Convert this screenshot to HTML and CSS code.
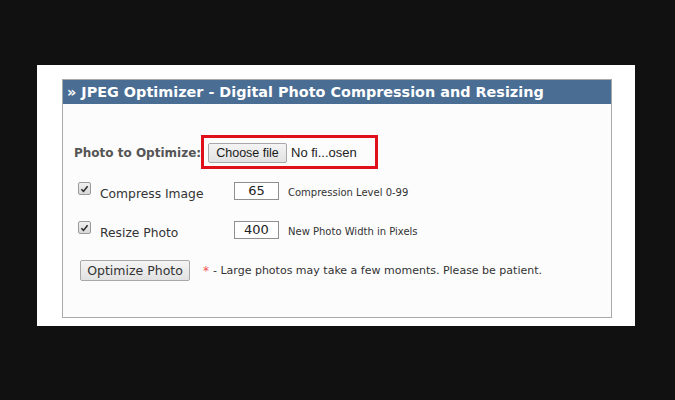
FILE: index.html
```html
<!DOCTYPE html>
<html>
<head>
<meta charset="utf-8">
<link rel="stylesheet" href="styles.css">
</head>
<body>
<div class="panel">
  <div class="box">
    <div class="head">» JPEG Optimizer - Digital Photo Compression and Resizing</div>
    <div class="row row-file">
      <span class="flabel">Photo to Optimize:</span>
      <span class="highlight">
        <button class="btn btn-file">Choose file</button>
        <span class="fname">No fi...osen</span>
      </span>
    </div>
    <div class="row row-opt">
      <span class="check"><svg viewBox="0 0 12 12" width="12" height="12"><path d="M2.6 6.2 L4.9 8.6 L9.4 2.9" fill="none" stroke="#2a2a2a" stroke-width="1.7"/></svg></span>
      <span class="olabel">Compress Image</span>
      <span class="num">65</span>
      <span class="note">Compression Level 0-99</span>
    </div>
    <div class="row row-opt row-opt2">
      <span class="check"><svg viewBox="0 0 12 12" width="12" height="12"><path d="M2.6 6.2 L4.9 8.6 L9.4 2.9" fill="none" stroke="#2a2a2a" stroke-width="1.7"/></svg></span>
      <span class="olabel">Resize Photo</span>
      <span class="num">400</span>
      <span class="note">New Photo Width in Pixels</span>
    </div>
    <div class="row row-go">
      <button class="btn btn-go">Optimize Photo</button>
      <span class="star">*</span>
      <span class="msg">- Large photos may take a few moments. Please be patient.</span>
    </div>
  </div>
</div>
</body>
</html>
```

FILE: styles.css
```css
html, body {
  margin: 0;
  padding: 0;
  background: #111111;
  height: 400px;
  overflow: hidden;
}
body {
  padding: 65px 0 0 37px;
  box-sizing: border-box;
  font-family: "DejaVu Sans", Verdana, sans-serif;
}
.panel {
  width: 598px;
  height: 261px;
  background: #ffffff;
  padding: 14px 0 0 25px;
  box-sizing: border-box;
}
.box {
  width: 550px;
  height: 239px;
  box-sizing: border-box;
  border: 1px solid #a9a9a9;
  background: #fcfcfc;
}
.head {
  height: 24px;
  line-height: 24px;
  background: #4a6d93;
  color: #ffffff;
  font-weight: bold;
  font-size: 14.4px;
  padding-left: 4px;
  white-space: nowrap;
  overflow: hidden;
}
.row {
  display: flex;
  align-items: center;
}
.row-file {
  margin-top: 31px;
  height: 34px;
  padding-left: 11px;
}
.flabel {
  font-weight: bold;
  font-size: 12px;
  color: #555555;
  width: 127px;
  flex-shrink: 0;
  white-space: nowrap;
  padding-top: 1px;
}
.highlight {
  display: flex;
  align-items: center;
  border: 3px solid #e0101a;
  padding: 5px 18px 4px 4px;
  height: 34px;
  box-sizing: border-box;
}
.btn {
  font-family: "Liberation Sans", Arial, sans-serif;
  color: #1a1a1a;
  background: linear-gradient(#f4f4f4, #e2e2e2);
  border: 1px solid #a8a8a8;
  border-radius: 2px;
  padding: 0;
  margin: 0;
}
.btn-file {
  width: 79px;
  height: 20px;
  font-size: 12.5px;
}
.fname {
  font-family: "Liberation Sans", Arial, sans-serif;
  font-size: 13px;
  color: #222222;
  margin-left: 4px;
}
.row-opt {
  margin-top: 11px;
  height: 22px;
  padding-left: 15px;
}
.row-opt2 {
  margin-top: 17px;
}
.check {
  width: 11px;
  height: 11px;
  border: 1px solid #9a9a9a;
  border-radius: 2px;
  background: linear-gradient(#f0f0f0, #d8d8d8);
  display: flex;
  align-items: center;
  justify-content: center;
  margin-bottom: 5px;
  margin-right: 9px;
}
.olabel {
  width: 134px;
  font-size: 12.3px;
  color: #333333;
  padding-top: 5px;
}
.num {
  width: 45px;
  height: 18px;
  box-sizing: border-box;
  border: 1px solid #8f8f8f;
  background: #ffffff;
  font-size: 13px;
  color: #222222;
  text-align: center;
  line-height: 16px;
}
.note {
  font-size: 10px;
  color: #333333;
  margin-left: 9px;
  padding-top: 2px;
}
.row-go {
  margin-top: 18px;
  height: 23px;
  padding-left: 17px;
}
.btn-go {
  width: 110px;
  height: 21px;
  font-family: "DejaVu Sans", Verdana, sans-serif;
  font-size: 12.5px;
  color: #333333;
}
.star {
  color: #f05050;
  font-size: 12px;
  margin-left: 13px;
  margin-right: 4px;
}
.msg {
  font-size: 11px;
  color: #333333;
}
```
